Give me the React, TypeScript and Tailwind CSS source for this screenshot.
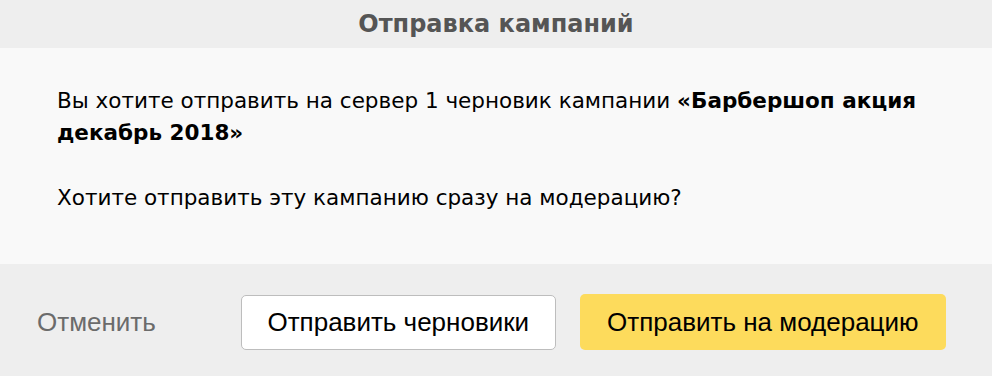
import React from 'react'

const SANS = "font-['DejaVu_Sans',Verdana,sans-serif]"
const HELV = "font-['Liberation_Sans',Arial,sans-serif]"

export default function App(): React.ReactElement {
  return (
    <div className="w-[992px] h-[376px] flex flex-col bg-[#eeeeee]">
      {/* Header */}
      <div className="h-[48px] flex items-center justify-center flex-shrink-0">
        <h1 className={`${SANS} text-[24px] font-bold text-[#555555] leading-none`}>Отправка кампаний</h1>
      </div>

      {/* Body */}
      <div className={`${SANS} h-[216px] bg-[#f9f9f9] pl-[57px] pr-[40px] pt-[37px] text-[21.5px] leading-[32px] text-black flex-shrink-0`}>
        <p>
          Вы хотите отправить на сервер 1 черновик кампании <b>«Барбершоп акция декабрь 2018»</b>
        </p>
        <p className="mt-[33px]">Хотите отправить эту кампанию сразу на модерацию?</p>
      </div>

      {/* Footer */}
      <div className={`${HELV} flex-1 flex items-center pl-[37px] pt-[4px] text-[26px]`}>
        <button className="text-[#6b6b6b] mr-[85px]">Отменить</button>
        <button className="w-[315px] h-[55px] bg-white border border-[#bdbdbd] rounded-[5px] text-black mr-[24px]">
          Отправить черновики
        </button>
        <button className="w-[366px] h-[56px] bg-[#fddb5c] rounded-[5px] text-black">
          Отправить на модерацию
        </button>
      </div>
    </div>
  )
}
